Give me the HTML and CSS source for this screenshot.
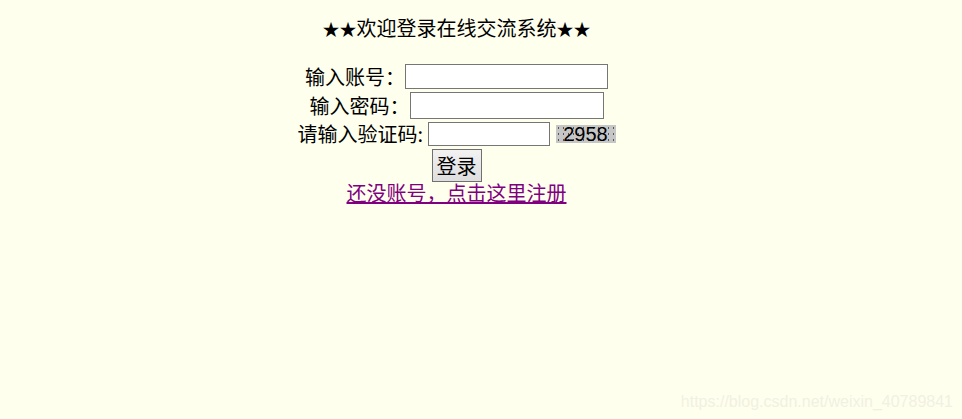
FILE: index.html
```html
<!DOCTYPE html>
<html lang="zh-CN">

<head>
  <meta charset="UTF-8">
  <title>在线交流系统 - 登录</title>
  <link rel="stylesheet" href="styles.css">
</head>

<body>

  <div class="page">
    <div class="title"><span class="stars">★★</span>欢迎登录在线交流系统<span class="stars">★★</span></div>

    <form class="login-form" onsubmit="return false;">
      <div class="row">
        <label for="account">输入账号：</label>
        <input type="text" id="account" class="input-account">
      </div>
      <div class="row">
        <label for="password">输入密码：</label>
        <input type="password" id="password" class="input-password">
      </div>
      <div class="row">
        <label for="code">请输入验证码<span class="colon">:</span></label>
        <input type="text" id="code" class="input-code">
        <span class="captcha">2958</span>
      </div>
      <div class="row">
        <button type="submit" class="btn-login">登录</button>
      </div>
      <div class="row row-link">
        <a href="#" class="register-link">还没账号，点击这里注册</a>
      </div>
    </form>
  </div>

  <div class="watermark">https://blog.csdn.net/weixin_40789841</div>

</body>

</html>
```

FILE: styles.css
```css
body {
  margin: 0;
  background-color: #ffffee;
  font-family: "Noto Sans CJK SC", "Liberation Sans", sans-serif;
  font-size: 20px;
  color: #000;
  height: 100vh;
}

.page {
  width: 913px;
  text-align: center;
  padding-top: 16px;
}

.title {
  line-height: 24px;
  height: 24px;
}

.stars {
  font-size: 17px;
}

.login-form {
  margin-top: 24px;
  display: flex;
  flex-direction: column;
  gap: 3px;
}

.row {
  display: flex;
  justify-content: center;
  align-items: center;
  line-height: 24px;
}

.row label {
  white-space: nowrap;
}

.colon {
  display: inline-block;
  width: 10px;
  text-align: left;
}

input {
  box-sizing: border-box;
  border: 1px solid #767676;
  background-color: #fff;
  padding: 0 2px;
  font-size: 16px;
  margin: 0;
}

.input-account {
  width: 203px;
  height: 25px;
}

.input-password {
  width: 194px;
  height: 27px;
}

.input-code {
  width: 122px;
  height: 24px;
}

.captcha {
  margin-left: 6px;
  width: 60px;
  height: 18px;
  line-height: 18px;
  font-family: "Liberation Sans", sans-serif;
  font-size: 20px;
  color: #000;
  background-color: #c6c6c6;
  background-image: radial-gradient(#555 0.5px, transparent 0.8px);
  background-size: 5px 6px;
}

.btn-login {
  box-sizing: border-box;
  width: 50px;
  height: 33px;
  font-family: "Noto Sans CJK SC", sans-serif;
  font-size: 20px;
  padding: 0;
  border: 1px solid #707070;
  background: linear-gradient(#f2f2f2, #dedede);
  color: #000;
}

.row-link {
  margin-top: -4px;
}

.register-link {
  color: #800080;
}

.watermark {
  position: absolute;
  right: 9px;
  bottom: 8px;
  font-family: "Liberation Sans", sans-serif;
  font-size: 16px;
  color: #f1f1e2;
}
```
